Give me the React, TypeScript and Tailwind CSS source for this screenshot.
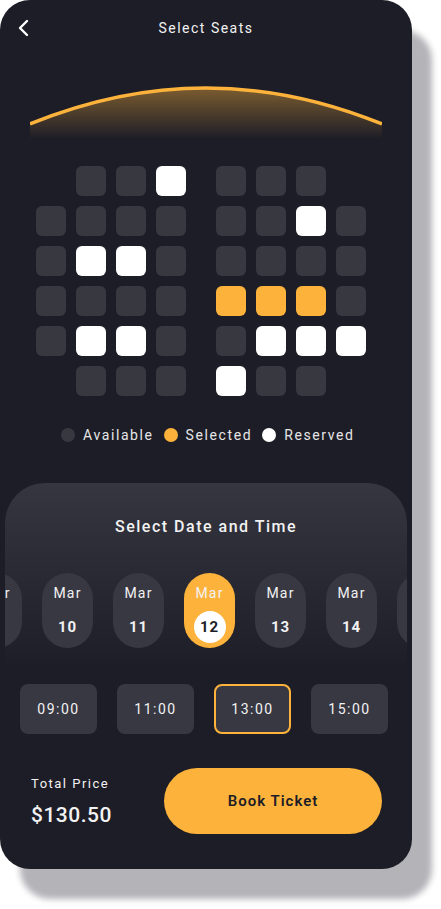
import React from "react";

type Seat = "A" | "S" | "R" | "-";

const leftRows: Seat[][] = [
  ["-", "A", "A", "R"],
  ["A", "A", "A", "A"],
  ["A", "R", "R", "A"],
  ["A", "A", "A", "A"],
  ["A", "R", "R", "A"],
  ["-", "A", "A", "A"],
];

const rightRows: Seat[][] = [
  ["A", "A", "A", "-"],
  ["A", "A", "R", "A"],
  ["A", "A", "A", "A"],
  ["S", "S", "S", "A"],
  ["A", "R", "R", "R"],
  ["R", "A", "A", "-"],
];

const seatClass: Record<Seat, string> = {
  A: "bg-[#383841]",
  S: "bg-[#fdb33b]",
  R: "bg-white",
  "-": "bg-transparent",
};

const SeatBlock = ({ rows }: { rows: Seat[][] }) => (
  <div className="grid grid-cols-4 gap-[10px]">
    {rows.flat().map((s, i) => (
      <div key={i} className={`w-[30px] h-[30px] rounded-[6px] ${seatClass[s]}`} />
    ))}
  </div>
);

const dates = ["9", "10", "11", "12", "13", "14", "15"];
const times = ["09:00", "11:00", "13:00", "15:00"];

export default function App() {
  return (
    <div className="min-h-screen bg-white font-['Roboto',sans-serif]">
      <div className="w-[412px] h-[869px] rounded-[30px] bg-[#1d1d27] shadow-[20px_30px_6px_#b4b3b8] flex flex-col overflow-hidden text-[#f2f2f2]">
        {/* header */}
        <div className="relative h-[56px] flex items-center justify-center">
          <svg className="absolute left-[16px] top-[19px]" width="14" height="18" viewBox="0 0 14 18" fill="none">
            <polyline points="11,2 4,9 11,16" stroke="#fff" strokeWidth="2.4" strokeLinecap="round" strokeLinejoin="round" />
          </svg>
          <span className="text-[14px] tracking-[1.5px]">Select Seats</span>
        </div>

        {/* screen arc */}
        <div className="mt-[28px] px-[30px]">
          <svg width="352" height="55" viewBox="0 0 352 55">
            <defs>
              <linearGradient id="glow" x1="0" y1="0" x2="0" y2="1">
                <stop offset="0" stopColor="#fdb33b" stopOpacity="0.42" />
                <stop offset="1" stopColor="#fdb33b" stopOpacity="0" />
              </linearGradient>
            </defs>
            <path d="M0 40 Q176 -32 352 40 L352 55 L0 55 Z" fill="url(#glow)" />
            <path d="M0 40 Q176 -32 352 40" stroke="#fdb33b" strokeWidth="3.5" fill="none" />
          </svg>
        </div>

        {/* seats */}
        <div className="mt-[27px] flex justify-center gap-[30px] pl-[36px] pr-[46px] self-start">
          <SeatBlock rows={leftRows} />
          <SeatBlock rows={rightRows} />
        </div>

        {/* legend */}
        <div className="mt-[31px] h-[16px] flex items-center pl-[61px] text-[14px] tracking-[1.6px] text-[#e6e6e6]">
          <span className="w-[14px] h-[14px] rounded-full bg-[#383841]" />
          <span className="ml-[8px]">Available</span>
          <span className="ml-[10px] w-[14px] h-[14px] rounded-full bg-[#fdb33b]" />
          <span className="ml-[8px]">Selected</span>
          <span className="ml-[10px] w-[14px] h-[14px] rounded-full bg-white" />
          <span className="ml-[8px]">Reserved</span>
        </div>

        {/* date sheet */}
        <div className="mt-[40px] mx-[5px] rounded-t-[40px] bg-gradient-to-b from-[#363640] to-[#1e1e28] overflow-hidden pt-[34px] pb-[17px]">
          <div className="h-[20px] flex items-center justify-center text-[16px] font-medium tracking-[1.5px]">
            Select Date and Time
          </div>
          <div className="mt-[36px] flex gap-[20px] ml-[-34px]">
            {dates.map((d) => {
              const active = d === "12";
              return (
                <div
                  key={d}
                  className={`shrink-0 w-[51px] h-[75px] rounded-full flex flex-col items-center ${
                    active ? "bg-[#fdb33b]" : "bg-[#383842]"
                  }`}
                >
                  <span className="mt-[12px] text-[14px] tracking-[1.2px] leading-[16px]">Mar</span>
                  <span
                    className={`mt-[10px] w-[32px] h-[32px] rounded-full flex items-center justify-center text-[15px] font-bold tracking-[1px] ${
                      active ? "bg-white text-[#1d1d27]" : ""
                    }`}
                  >
                    {d}
                  </span>
                </div>
              );
            })}
          </div>
        </div>

        {/* times */}
        <div className="mt-[19px] flex gap-[20px] px-[20px]">
          {times.map((t) => (
            <div
              key={t}
              className={`w-[77px] h-[50px] rounded-[8px] bg-[#383842] flex items-center justify-center text-[14px] tracking-[1.5px] ${
                t === "13:00" ? "border-2 border-[#fdb33b]" : ""
              }`}
            >
              {t}
            </div>
          ))}
        </div>

        {/* footer */}
        <div className="mt-[34px] flex items-center">
          <div className="w-[164px] pl-[31px] flex flex-col">
            <span className="text-[13px] tracking-[1.5px] leading-[16px]">Total Price</span>
            <span className="mt-[11px] text-[21px] font-medium tracking-[0.5px] leading-[24px]">$130.50</span>
          </div>
          <button className="w-[218px] h-[66px] rounded-full bg-[#fdb33b] text-[#1d1d27] text-[15px] font-semibold tracking-[1px]">
            Book Ticket
          </button>
        </div>
      </div>
    </div>
  );
}
